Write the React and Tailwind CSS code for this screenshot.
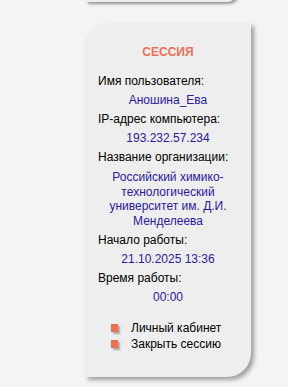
export default function App() {
  const label = "leading-[19px] text-black";
  const value = "leading-[19px] text-[#2a1aa0] text-center";

  return (
    <div className="min-h-screen bg-[#f4f4f4] font-['Liberation_Sans',Arial,sans-serif] text-[12px] overflow-hidden">
      {/* bottom of the previous block */}
      <div className="ml-[86px] -mt-[10px] h-[12px] w-[151px] bg-[#eeeeee] rounded-br-[10px] shadow-[2px_2px_3px_rgba(0,0,0,0.4)]" />

      {/* session block */}
      <div className="ml-[85px] mt-[21px] w-[166px] h-[354px] bg-[#eeeeee] rounded-tl-[22px] rounded-br-[24px] shadow-[3px_3px_4px_rgba(0,0,0,0.35)] pt-[22px] px-[13px]">
        <div className="text-center font-bold text-[#ec6e55] leading-[15px]">СЕССИЯ</div>

        <div className="mt-[12px]">
          <div className={label}>Имя пользователя:</div>
          <div className={value}>Аношина_Ева</div>
          <div className={label}>IP-адрес компьютера:</div>
          <div className={value}>193.232.57.234</div>
          <div className={label}>Название организации:</div>
          <div className="text-[#2a1aa0] text-center leading-[14.5px] mt-[3px] mb-[3px]">
            <div>Российский химико-</div>
            <div>технологический</div>
            <div>университет им. Д.И.</div>
            <div>Менделеева</div>
          </div>
          <div className={label}>Начало работы:</div>
          <div className={value}>21.10.2025 13:36</div>
          <div className={label}>Время работы:</div>
          <div className={value}>00:00</div>
        </div>

        <ul className="mt-[13px] pl-[13px]">
          {["Личный кабинет", "Закрыть сессию"].map((t) => (
            <li key={t} className="flex items-center gap-[13px] leading-[16px]">
              <span className="w-[7px] h-[8px] bg-[#ec6e55] shadow-[2px_2px_2px_rgba(0,0,0,0.3)]" />
              <span className="text-black">{t}</span>
            </li>
          ))}
        </ul>
      </div>
    </div>
  );
}
